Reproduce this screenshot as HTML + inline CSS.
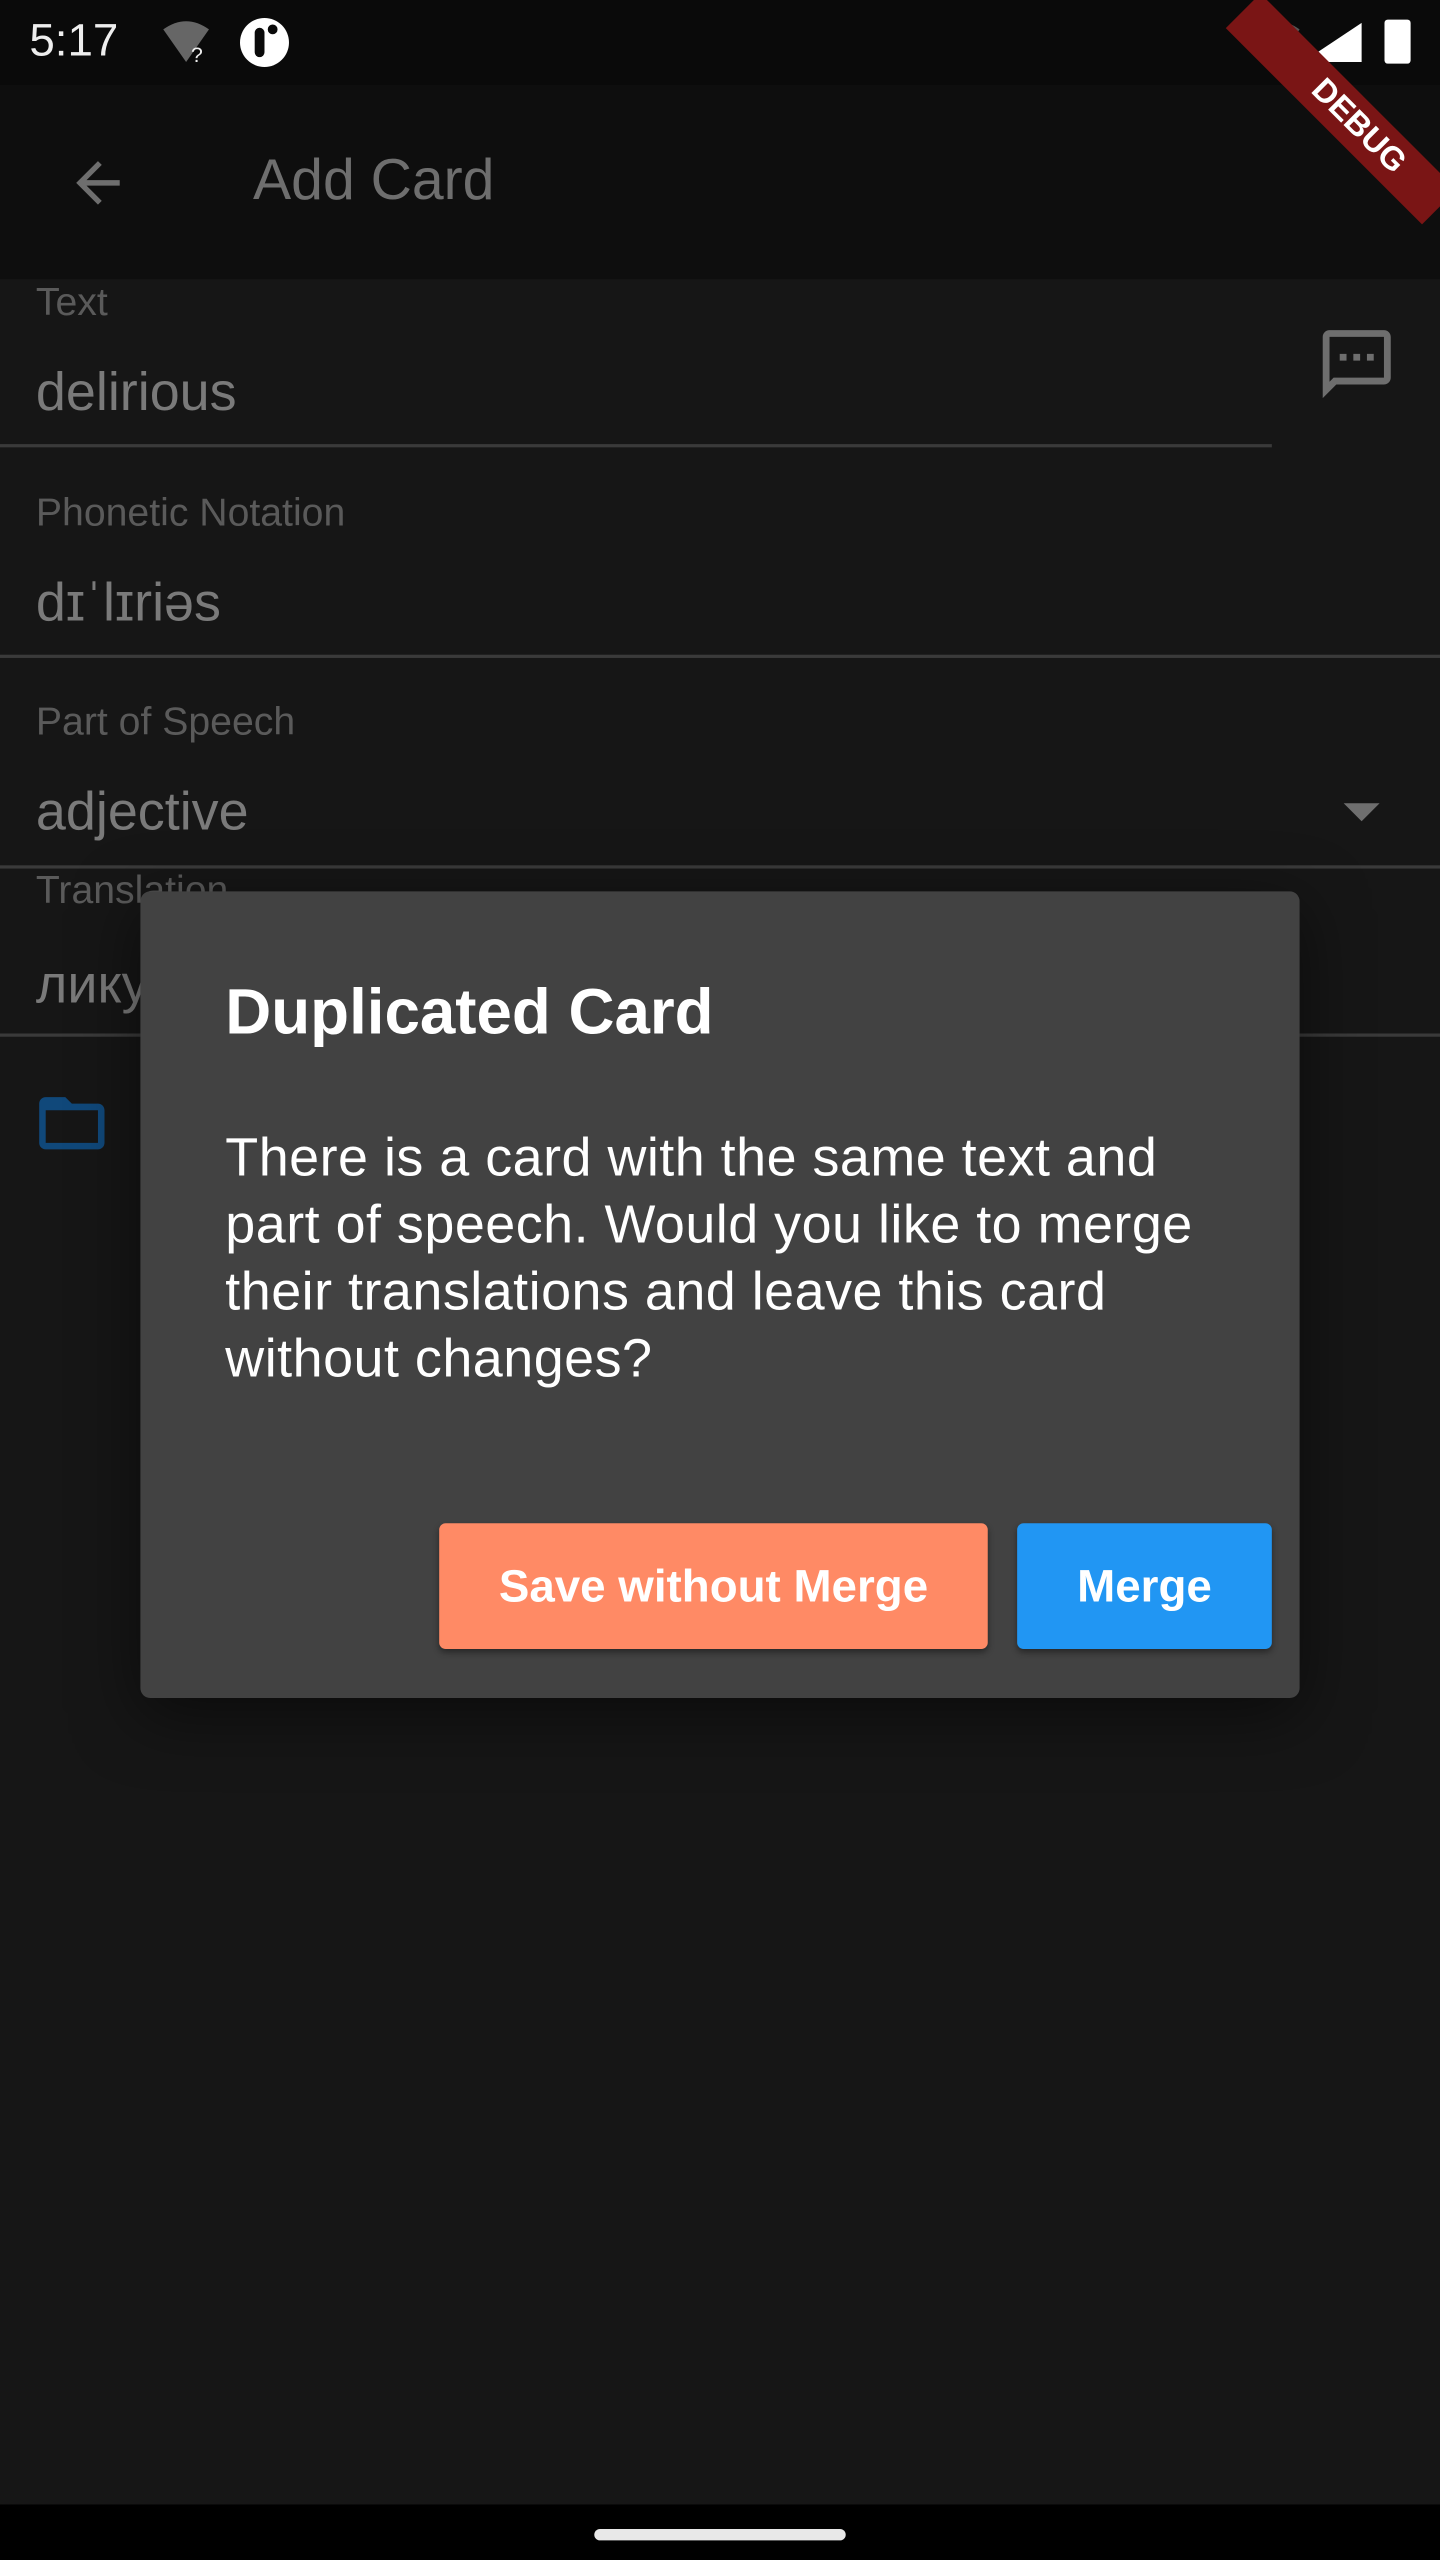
<!DOCTYPE html>
<html><head><meta charset="utf-8"><style>
html,body{margin:0;padding:0;background:#161616;width:1440px;height:2560px;overflow:hidden}
#s{position:absolute;left:0;top:0;width:882px;height:1568px;transform:scale(1.632653);transform-origin:0 0;background:#161616;font-family:"Liberation Sans",sans-serif;overflow:hidden}
.a{position:absolute}
.lab{position:absolute;left:22px;font-size:24px;color:#5a5a5a}
.val{position:absolute;left:22px;font-size:33px;color:#7a7a7a}
.line{position:absolute;left:0;height:2px;background:#3a3a3a}
</style></head><body><div id="s">
<div class="a" style="left:0;top:0;width:882px;height:52px;background:#0a0a0a"></div>
<div class="a" style="left:0;top:52px;width:882px;height:119px;background:#0e0e0e"></div>
<div class="a" style="left:18px;top:9px;font-size:28px;color:#eee">5:17</div>
<svg class="a" style="left:98px;top:12px" width="34" height="28" viewBox="0 0 34 28"><path d="M2 6 Q16 -4 30 6 L16 26 Z" fill="#666"/><text x="19" y="26" font-size="13" fill="#eee" font-family="Liberation Sans">?</text></svg>
<div class="a" style="left:147px;top:11px;width:30px;height:30px;border-radius:50%;background:#fff"></div>
<div class="a" style="left:156px;top:17px;width:6px;height:18px;background:#0a0a0a;border-radius:3px"></div>
<div class="a" style="left:164px;top:15px;width:6px;height:6px;background:#0a0a0a;border-radius:50%"></div>
<svg class="a" style="left:768px;top:10px" width="72" height="32"><path d="M2 8 Q14 -2 28 8 L15 28Z" fill="#555"/><path d="M30 28 L66 4 L66 28Z" fill="#fff"/></svg>
<div class="a" style="left:848px;top:12px;width:16px;height:27px;background:#fff;border-radius:2px"></div>
<div class="a" style="width:170px;height:30px;background:#7a1515;transform:rotate(45deg);transform-origin:0 0;left:772px;top:-4px;color:#fff;font-weight:bold;font-size:20px;line-height:30px;text-align:center;text-indent:30px">DEBUG</div>
<svg class="a" style="left:40px;top:92px" width="40" height="40" viewBox="0 0 24 24"><path d="M20 11H7.8l5.6-5.6L12 4l-8 8 8 8 1.4-1.4L7.8 13H20z" fill="#6e6e6e"/></svg>
<div class="a" style="left:155px;top:91px;font-size:35px;color:#6e6e6e">Add Card</div>

<div class="lab" style="top:172px">Text</div>
<div class="val" style="top:221px">delirious</div>
<div class="line" style="top:272px;width:779px"></div>
<svg class="a" style="left:806px;top:198px" width="50" height="50" viewBox="0 0 24 24"><path d="M20 2H4c-1.1 0-2 .9-2 2v18l4-4h14c1.1 0 2-.9 2-2V4c0-1.1-.9-2-2-2zm0 14H5.2L4 17.2V4h16v12zM7 9h2v2H7zm4 0h2v2h-2zm4 0h2v2h-2z" fill="#6e6e6e"/></svg>

<div class="lab" style="top:301px">Phonetic Notation</div>
<div class="val" style="top:350px">dɪˈlɪriəs</div>
<div class="line" style="top:401px;width:882px"></div>

<div class="lab" style="top:429px">Part of Speech</div>
<div class="val" style="top:478px">adjective</div>
<div class="a" style="left:823px;top:492px;width:0;height:0;border-left:11px solid transparent;border-right:11px solid transparent;border-top:11px solid #6e6e6e"></div>
<div class="line" style="top:530px;width:882px"></div>

<div class="lab" style="top:532px">Translation</div>
<div class="val" style="top:584px">ликую</div>
<div class="line" style="top:633px;width:882px"></div>
<svg class="a" style="left:20px;top:664px" width="48" height="48" viewBox="0 0 24 24"><path d="M20 6h-8l-2-2H4c-1.1 0-2 .9-2 2v12c0 1.1.9 2 2 2h16c1.1 0 2-.9 2-2V8c0-1.1-.9-2-2-2zm0 12H4V8h16v10z" fill="#10487a"/></svg>

<div class="a" style="left:86px;top:546px;width:710px;height:494px;background:#424242;border-radius:6px;box-shadow:0 10px 40px rgba(0,0,0,.5)"></div>
<div class="a" style="left:138px;top:599px;font-size:39px;font-weight:bold;color:#fff">Duplicated Card</div>
<div class="a" style="left:138px;top:688px;white-space:nowrap;font-size:33px;letter-spacing:0.3px;line-height:41px;color:#fff">There is a card with the same text and<br>part of speech. Would you like to merge<br>their translations and leave this card<br>without changes?</div>
<div class="a" style="left:269px;top:933px;width:336px;height:77px;background:#ff8a65;border-radius:4px;box-shadow:0 2px 4px rgba(0,0,0,.4);color:#fff;font-weight:bold;font-size:28px;line-height:77px;text-align:center">Save without Merge</div>
<div class="a" style="left:623px;top:933px;width:156px;height:77px;background:#2196f3;border-radius:4px;box-shadow:0 2px 4px rgba(0,0,0,.4);color:#fff;font-weight:bold;font-size:28px;line-height:77px;text-align:center">Merge</div>

<div class="a" style="left:0;top:1534px;width:882px;height:34px;background:#000"></div>
<div class="a" style="left:364px;top:1549px;width:154px;height:7px;border-radius:4px;background:#e8e8e8"></div>
</div></body></html>
